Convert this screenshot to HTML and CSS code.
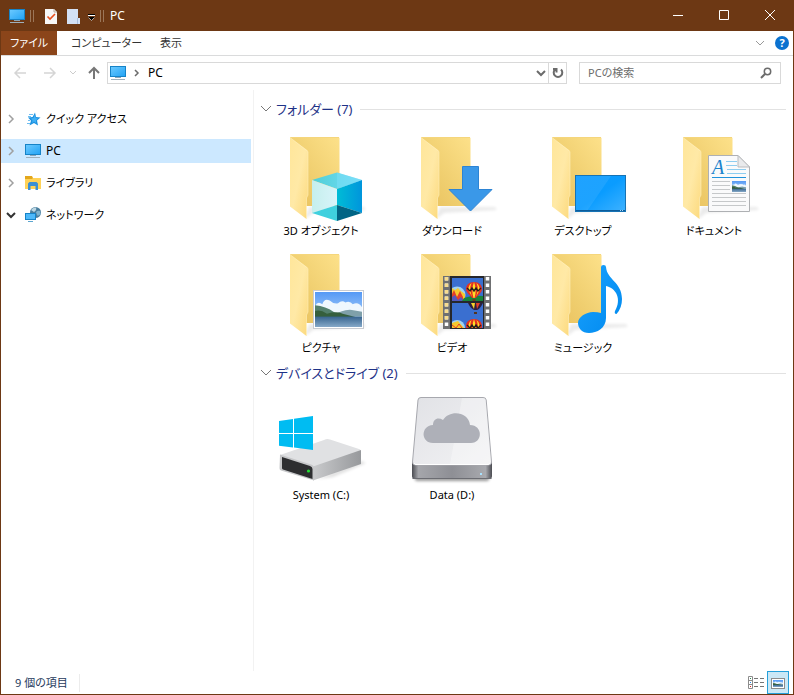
FILE: index.html
```html
<!DOCTYPE html>
<html lang="ja">

<head>
    <meta charset="UTF-8">
    <meta name="viewport" content="width=device-width, initial-scale=1.0">
    <title>PC</title>
    <link rel="stylesheet" href="styles.css">
</head>

<body>
    <!-- 共通アイコン -->
    <svg class="defs" width="0" height="0" aria-hidden="true">
        <defs>
            <linearGradient id="gBack" x1="0" y1="1" x2="1" y2="0">
                <stop offset="0" stop-color="#e8c05c" />
                <stop offset=".45" stop-color="#f0cf70" />
                <stop offset="1" stop-color="#fde18a" />
            </linearGradient>
            <linearGradient id="gFlap" x1="0" y1="0" x2="1" y2="1">
                <stop offset="0" stop-color="#ffe69a" />
                <stop offset=".5" stop-color="#ffe9a6" />
                <stop offset="1" stop-color="#fcd97c" />
            </linearGradient>
            <linearGradient id="gScreen" x1="0" y1="0" x2="1" y2="1">
                <stop offset="0" stop-color="#6ac9ff" />
                <stop offset="1" stop-color="#24a4f5" />
            </linearGradient>
            <linearGradient id="gCubeTop" x1="0" y1="0" x2="1" y2="0">
                <stop offset="0" stop-color="#4fcfd6" />
                <stop offset="1" stop-color="#76dcf8" />
            </linearGradient>
            <linearGradient id="gCubeLeft" x1="0" y1="0" x2="1" y2="0">
                <stop offset="0" stop-color="#c5efed" />
                <stop offset="1" stop-color="#d9f4fa" />
            </linearGradient>
            <linearGradient id="gCubeRight" x1="0" y1="0" x2="1" y2="0">
                <stop offset="0" stop-color="#00bcd6" />
                <stop offset="1" stop-color="#0095dc" />
            </linearGradient>
            <linearGradient id="gDesk" x1="0" y1="0" x2="1" y2="1">
                <stop offset="0" stop-color="#0c9bff" />
                <stop offset=".5" stop-color="#0a9cff" />
                <stop offset="1" stop-color="#3fb2ff" />
            </linearGradient>
            <linearGradient id="gSky" x1="0" y1="0" x2="0" y2="1">
                <stop offset="0" stop-color="#5599f5" />
                <stop offset="1" stop-color="#c8e2fb" />
            </linearGradient>
            <linearGradient id="gSea" x1="0" y1="0" x2="0" y2="1">
                <stop offset="0" stop-color="#37648f" />
                <stop offset="1" stop-color="#86a9c8" />
            </linearGradient>
            <linearGradient id="gNote" x1="0" y1="0" x2="1" y2="1">
                <stop offset="0" stop-color="#1ba3ff" />
                <stop offset="1" stop-color="#0089ee" />
            </linearGradient>
            <linearGradient id="gSide" x1="0" y1="0" x2="1" y2="0">
                <stop offset="0" stop-color="#c9cacc" />
                <stop offset="1" stop-color="#97999c" />
            </linearGradient>
            <linearGradient id="gDiskTop" x1="0" y1="0" x2="1" y2="1">
                <stop offset="0" stop-color="#e1e2e6" />
                <stop offset="1" stop-color="#f2f2f4" />
            </linearGradient>
            <linearGradient id="gDiskFront" x1="0" y1="0" x2="1" y2="0">
                <stop offset="0" stop-color="#4b4c52" />
                <stop offset=".08" stop-color="#a5a6ab" />
                <stop offset=".5" stop-color="#8e8f95" />
                <stop offset=".92" stop-color="#a8a9ae" />
                <stop offset="1" stop-color="#4b4c52" />
            </linearGradient>
            <filter id="soft" x="-30%" y="-100%" width="160%" height="300%">
                <feGaussianBlur stdDeviation="1.5" />
            </filter>
        </defs>
        <symbol id="folder" viewBox="0 0 96 94">
            <path d="M34 89 L32 88 L36 78 L91 78 L93 81 L40 84 Z" fill="#000" opacity=".08" filter="url(#soft)" />
            <path d="M17 8 H65 Q66.500 8 66.500 9.500 V77 H17 Z" fill="url(#gBack)" />
            <path d="M17 8.500 H66" stroke="#f5d67c" />
            <path d="M17 8.500 L34 21 Q35 22 35 23.500 V66 L33.500 69 V90 L17 77.500 Z" fill="url(#gFlap)" />
            <path d="M17 8.500 L35 22.500 V66 L33.500 69 V90" fill="none" stroke="#fff0be" stroke-width=".6" />
        </symbol>
        <symbol id="pc" viewBox="0 0 18 16">
            <rect x="1" y="1" width="16" height="11" fill="#1683c7" />
            <rect x="2" y="2" width="14" height="9" fill="url(#gScreen)" />
            <rect x="6" y="12" width="6" height="1" fill="#8aa5b8" />
            <rect x="2" y="14" width="14" height="1" fill="#9fb0bc" />
        </symbol>
        <symbol id="view" viewBox="0 0 51 37">
            <rect width="51" height="37" fill="url(#gSky)" />
            <path d="M0 19 V15 Q3 9 8 13 Q10 6 16 9 Q20 13 25 12 Q29 8 33 11 Q38 9 41 13 Q47 10 51 16 V26 H0 Z" fill="#eff7fe" />
            <path d="M18 26 Q30 18 40 19 L51 21 V26 Z" fill="#7fa0aa" />
            <path d="M0 14 Q12 15 20 21 L32 27 H0 Z" fill="#53806d" />
            <path d="M0 20 Q6 18 13 23 Q24 20 30 23 L46 27 H0 Z" fill="#355f3d" />
            <rect y="26" width="51" height="11" fill="url(#gSea)" />
        </symbol>
        <symbol id="balloon" viewBox="0 0 16 19">
            <path d="M8 0 C3 0 0 3 0 7 C0 11 5 14 6 16 H10 C11 14 16 11 16 7 C16 3 13 0 8 0 Z" fill="#e33122" />
            <path d="M5.500 1 Q2.500 8 6.500 15 L4.500 12 Q0 5 5.500 1 M8 0 Q5 8 7.500 16 H8.500 Q11 8 8 0 M10.500 1 Q13.500 8 9.500 15 L11.500 12 Q16 5 10.500 1" fill="#ffdf27" />
            <path d="M1 6 L4 9 L6 6 L8 9 L10 6 L12 9 L15 6" fill="none" stroke="#26201c" stroke-width="1.400" />
            <rect x="6.500" y="17" width="3" height="2" fill="#6d3d18" />
        </symbol>
    </svg>

    <div class="window">
        <header class="titlebar">
            <svg class="pc-icon" width="18" height="16"><use href="#pc" /></svg>
            <svg class="quick" width="78" height="18" viewBox="0 0 78 18">
                <path d="M4.500 3 V15 M7.500 3 V15 M74.500 3 V15 M77.500 3 V15" stroke="#9b7659" />
                <path d="M19 2 H28 L31 5 V17 H19 Z" fill="#f7f7f7" />
                <path d="M28 2 V5 H31" fill="none" stroke="#b9a99e" />
                <path d="M21.500 9.500 L24 12 L29 7" fill="none" stroke="#e8501e" stroke-width="1.600" />
                <path d="M41 2 H52 V11 H54 V17 H41 Z" fill="#d3e0f4" />
                <path d="M51.500 11 V17" stroke="#a8bddb" />
                <path d="M62 7.500 H69" stroke="#000" />
                <path d="M62 8.500 H69" stroke="#fff" />
                <path d="M62 10 H69 L65.500 13.500 Z" fill="#000" />
                <path d="M62.500 10.500 L65.500 13.500 L68.500 10.500" fill="none" stroke="#fff" stroke-width=".6" />
            </svg>
            <h1 class="title">PC</h1>
            <div class="controls">
                <button type="button" aria-label="最小化"><svg width="12" height="12"><path d="M1 5.500 H11" /></svg></button>
                <button type="button" aria-label="最大化"><svg width="12" height="12"><path d="M1.500 .5 H10.500 V9.500 H1.500 Z" /></svg></button>
                <button type="button" aria-label="閉じる"><svg width="12" height="12"><path d="M1 0 L11 10 M11 0 L1 10" /></svg></button>
            </div>
        </header>

        <div class="ribbon">
            <button type="button" class="tab active">ファイル</button>
            <button type="button" class="tab">コンピューター</button>
            <button type="button" class="tab">表示</button>
            <button type="button" class="expand" aria-label="リボンの展開"><svg width="10" height="6"><path d="M1 1 L5 5 L9 1" /></svg></button>
            <button type="button" class="help" aria-label="ヘルプ">?</button>
        </div>

        <div class="navbar">
            <button type="button" class="arrow off" aria-label="戻る"><svg width="14" height="12"><path d="M7 1 L2 6 L7 11 M2 6 H13" /></svg></button>
            <button type="button" class="arrow off" aria-label="進む"><svg width="14" height="12"><path d="M7 1 L12 6 L7 11 M12 6 H1" /></svg></button>
            <button type="button" class="recent" aria-label="最近表示した場所"><svg width="8" height="6"><path d="M1 1 L4 4 L7 1" /></svg></button>
            <button type="button" class="arrow up" aria-label="上へ"><svg width="14" height="14"><path d="M2 7 L7 2 L12 7 M7 2 V13" /></svg></button>
            <div class="address">
                <svg class="pc-icon" width="18" height="16"><use href="#pc" /></svg>
                <svg class="crumb" width="6" height="8"><path d="M1 1 L4 4 L1 7" /></svg>
                <a href="#">PC</a>
                <button type="button" class="drop" aria-label="以前の場所"><svg width="10" height="7"><path d="M1 1 L5 5 L9 1" /></svg></button>
                <button type="button" class="refresh" aria-label="更新"><svg width="12" height="12"><path d="M9 2.500 A4.300 4.300 0 1 1 3 2.500 M1 2 H4.500 V5.500" /></svg></button>
            </div>
            <div class="search">
                <input type="text" placeholder="PCの検索" aria-label="PCの検索">
                <svg width="12" height="12"><circle cx="7.500" cy="4.500" r="3.200" /><path d="M5 7 L1 11" /></svg>
            </div>
        </div>

        <div class="body">
            <nav class="tree">
                <a href="#">
                    <svg class="tri" width="10" height="10"><path d="M3 1 L7 5 L3 9" /></svg>
                    <svg width="18" height="16" viewBox="0 0 18 16">
                        <path d="M11 1.500 L12 6 L16.500 6.500 L13 9.500 L14 14.500 L10 12 L5.500 14.500 L7 9.800 L4 6.500 L8.600 6 Z" fill="#1d92e0" />
                        <path d="M11 3.500 L11.600 7 L14 7.500 L12 9.500 L12 12 L10 10.500 L8 12 L8.500 9.500 L7 7.500 L9.500 7 Z" fill="#3fb0f5" />
                        <path d="M5 3.500 H9 M4 5.500 H7 M4 9.500 H6 M3 12.500 H6" stroke="#6ebef2" />
                    </svg>
                    <span>クイック アクセス</span>
                </a>
                <a href="#" class="selected">
                    <svg class="tri" width="10" height="10"><path d="M3 1 L7 5 L3 9" /></svg>
                    <svg width="18" height="16"><use href="#pc" /></svg>
                    <span>PC</span>
                </a>
                <a href="#">
                    <svg class="tri" width="10" height="10"><path d="M3 1 L7 5 L3 9" /></svg>
                    <svg width="18" height="16" viewBox="0 0 18 16">
                        <path d="M1 1 H8 L9 3 H17 V14 H1 Z" fill="#e3a71c" />
                        <path d="M1 4 H8 L9 3 H17 V14 H1 Z" fill="#ffd257" />
                        <path d="M4 15 V8.500 L5.500 7 H12.500 L14 8.500 V15 H11.500 V11 H6.500 V15 Z" fill="#3a8fd4" />
                    </svg>
                    <span>ライブラリ</span>
                </a>
                <a href="#" class="open">
                    <svg class="tri" width="10" height="10"><path d="M1 3 L5 7 L9 3" /></svg>
                    <svg width="18" height="16" viewBox="0 0 18 16">
                        <circle cx="11.500" cy="5.500" r="5.500" fill="#4a7f9f" />
                        <path d="M7 3 Q9 0 12 .5 Q13 3 10 5 Z" fill="#bcd6e2" />
                        <path d="M12 5 Q14 3 16 4 L16.500 7 Q14 10 13 8 Z" fill="#7fb4cf" />
                        <rect x="1" y="6" width="11" height="7" fill="#1683c7" />
                        <rect x="2" y="7" width="9" height="5" fill="#4db9fa" />
                        <path d="M4 14.500 H9" stroke="#5ba5cf" />
                    </svg>
                    <span>ネットワーク</span>
                </a>
            </nav>

            <main class="content">
                <section>
                    <h2><svg width="12" height="8"><path d="M1 1 L6 6 L11 1" /></svg>フォルダー (7)</h2>
                    <div class="grid">
                        <a href="#" class="item">
                            <svg width="96" height="94" viewBox="0 0 96 94">
                                <use href="#folder" />
                                <path d="M39 51 L64 43.500 L89 51 L64 60 Z" fill="url(#gCubeTop)" />
                                <path d="M64 43.500 L89 51 L64 60 Z" fill="#7ce0fa" opacity=".5" />
                                <path d="M39 51 L64 60 V76 L39 84 Z" fill="url(#gCubeLeft)" />
                                <path d="M64 60 L89 51 V84 L64 76 Z" fill="url(#gCubeRight)" />
                                <path d="M39 84 L64 76 V92 Z" fill="#3fd0de" />
                                <path d="M64 76 L89 84 L64 92 Z" fill="#016484" />
                            </svg>
                            <span>3D オブジェクト</span>
                        </a>
                        <a href="#" class="item">
                            <svg width="96" height="94" viewBox="0 0 96 94">
                                <use href="#folder" />
                                <path d="M58.500 37.500 H74.500 V60.500 H88 L66.500 82 L45 60.500 H58.500 Z" fill="#3a98e8" stroke="#2d84d4" />
                            </svg>
                            <span>ダウンロード</span>
                        </a>
                        <a href="#" class="item">
                            <svg width="96" height="94" viewBox="0 0 96 94">
                                <use href="#folder" />
                                <rect x="40.500" y="46.500" width="50" height="36" fill="url(#gDesk)" stroke="#1673b5" />
                                <path d="M41 82 V47 H76 L52 82 Z" fill="#fff" opacity=".08" />
                                <path d="M41 81.500 H90" stroke="#0d5c9a" />
                                <path d="M85 81.500 H89" stroke="#a8d8f8" stroke-dasharray="1 1" />
                            </svg>
                            <span>デスクトップ</span>
                        </a>
                        <a href="#" class="item">
                            <svg width="96" height="94" viewBox="0 0 96 94">
                                <use href="#folder" />
                                <path d="M42.500 26.500 H72 L83.500 38 V82.500 H42.500 Z" fill="#fafafb" stroke="#aeb0b3" />
                                <path d="M72 26.500 V38 H83.500 Z" fill="#e9eaec" stroke="#b9bbbe" />
                                <text x="46" y="45" class="glyph">A</text>
                                <path d="M60 32.500 H71 M60 36.500 H71 M61 40.500 H80 M61 44.500 H80" stroke="#8ecdf0" />
                                <path d="M46 48.500 H80" stroke="#2193dc" />
                                <path d="M46 52.500 H64 M46 56.500 H64 M46 60.500 H64 M46 64.500 H80 M46 68.500 H80 M46 72.500 H80 M46 76.500 H80" stroke="#c6c8ca" />
                                <svg x="66" y="52" width="14" height="11" viewBox="0 0 51 37" preserveAspectRatio="none"><use href="#view" width="51" height="37" /></svg>
                            </svg>
                            <span>ドキュメント</span>
                        </a>
                        <a href="#" class="item">
                            <svg width="96" height="94" viewBox="0 0 96 94">
                                <use href="#folder" />
                                <rect x="40.500" y="44.500" width="50" height="38" fill="#fff" stroke="#c9ccd2" />
                                <svg x="42" y="46" width="47" height="35" viewBox="0 0 51 37" preserveAspectRatio="none"><use href="#view" width="51" height="37" /></svg>
                            </svg>
                            <span>ピクチャ</span>
                        </a>
                        <a href="#" class="item">
                            <svg width="96" height="94" viewBox="0 0 96 94">
                                <use href="#folder" />
                                <rect x="39" y="30" width="48" height="53" fill="#6f7072" />
                                <rect x="46" y="30" width="34" height="53" fill="#26272b" />
                                <path d="M42.500 31 V83 M83.500 31 V83" stroke="#fff" stroke-width="3.500" stroke-dasharray="3.500 3" />
                                <path d="M42.500 31 V76" stroke="#f7dc90" stroke-width="3.500" stroke-dasharray="3.500 3" />
                                <svg x="48" y="32" width="31" height="23">
                                    <rect width="31" height="23" fill="#3a6fd0" />
                                    <circle cx="5" cy="17" r="8.500" fill="#9fd2f2" />
                                    <path d="M0 10 L3 12 L6 10 L9 13 L13 16 V24 H0 Z" fill="#f6c92d" />
                                    <path d="M0 16 L2 12 L5 19 L8 13 L11 19 V24 H0 Z" fill="#e3402a" />
                                    <path d="M0 19 L3 17 L6 22 L9 19 L12 23 H0 Z" fill="#5558bd" />
                                    <path d="M12 20 Q20 17 31 18 V23 H10 Z" fill="#18843b" />
                                    <use href="#balloon" x="14" y="4" width="16" height="19" />
                                </svg>
                                <svg x="48" y="57" width="31" height="25">
                                    <rect width="31" height="25" fill="#3a6fd0" />
                                    <path d="M16 0 H31 Q28 6 25 7 H22 Q18 5 16 0 Z" fill="#2c1e3f" />
                                    <path d="M19 0 L22 6 L23 0 Z" fill="#f6d42b" />
                                    <path d="M24 0 L25 6 L28 0 Z" fill="#e3402a" />
                                    <rect x="22" y="9" width="3" height="2" fill="#543520" />
                                    <circle cx="5" cy="25" r="8" fill="#9fd2f2" />
                                    <path d="M0 20 L6 18 L12 25 H0 Z" fill="#f6c92d" />
                                    <path d="M0 22 L4 25 L7 21 L10 25" fill="none" stroke="#e3402a" />
                                    <use href="#balloon" x="14" y="16" width="16" height="19" />
                                </svg>
                            </svg>
                            <span>ビデオ</span>
                        </a>
                        <a href="#" class="item">
                            <svg width="96" height="94" viewBox="0 0 96 94">
                                <use href="#folder" />
                                <path d="M66 21 Q66 19 68.500 19 Q71 19 71 21 C72 34 87 36 87 53 Q87 62 81.500 68 Q79 68 80 65 C87 53 81 42 71 40 V72 C71 82 62 87 54 87 C47 87 43 82 43 77 C43 71 51 66 58 66 Q63 66 66 67 Z" fill="url(#gNote)" />
                            </svg>
                            <span>ミュージック</span>
                        </a>
                    </div>
                </section>

                <section>
                    <h2><svg width="12" height="8"><path d="M1 1 L6 6 L11 1" /></svg>デバイスとドライブ (2)</h2>
                    <div class="grid">
                        <a href="#" class="item">
                            <svg width="96" height="94" viewBox="0 0 96 94">
                                <path d="M44 86 L88 68 L93 70 L60 84 Z" fill="#000" opacity=".12" filter="url(#soft)" />
                                <path d="M7 62 L51 47 Q54 45.500 57 46.500 L86 56 Q89 57 86 58.500 L41 74 Z" fill="#e0e1e3" />
                                <path d="M40 73.500 L88 57 V71 L40 87.500 Z" fill="url(#gSide)" />
                                <path d="M7 61.500 L38 71.500 Q41 72.500 41 75 V87.500 L8 77.500 Q6.500 77 6.500 75 Z" fill="#c6c7c9" />
                                <path d="M9 64 L37 73 Q39.500 74 39.500 76 V86 L10 76.500 Q9 76 9 75 Z" fill="#2d2e30" />
                                <circle cx="35.500" cy="78" r="1.600" fill="#25e034" />
                                <path d="M6 28 L20 26 V40 H6 Z M21 25.800 L40 23 V40 H21 Z M6 41 H20 V54.500 L6 52.700 Z M21 41 H40 V57 L21 54.600 Z" fill="#00bcf2" />
                            </svg>
                            <span>System (C:)</span>
                        </a>
                        <a href="#" class="item">
                            <svg width="96" height="94" viewBox="0 0 96 94">
                                <path d="M10 84 H86 L84 88 H12 Z" fill="#000" opacity=".4" filter="url(#soft)" />
                                <path d="M8 69 H88 V83 Q88 86 85 86 H11 Q8 86 8 83 Z" fill="url(#gDiskFront)" />
                                <path d="M17 4.500 H79 Q82 4.500 82.200 7 L87.500 69 Q87.500 72 84.500 72 H11.500 Q8.500 72 8.500 69 L14 7 Q14.200 4.500 17 4.500 Z" fill="url(#gDiskTop)" stroke="#a7a8ae" />
                                <path d="M10 70 Q10 71.500 12 71.500 H84 Q86 71.500 86 70" fill="none" stroke="#fff" />
                                <path d="M58 5 H79 Q81.500 5 81.700 7 L87 69 Q87 71 84 71 H46 Z" fill="#fff" opacity=".3" />
                                <path d="M29 50 C17 50 16 33 29 32 C29 26 34 24 39 27 C46 16 65 19 66 32 C79 32 79 50 67 50 Z" fill="#aeb0b8" />
                                <path d="M8.500 85.500 H87.500" stroke="#6b6c72" />
                                <rect x="76" y="80" width="2" height="2" fill="#a8e2ff" />
                            </svg>
                            <span>Data (D:)</span>
                        </a>
                    </div>
                </section>
            </main>
        </div>

        <footer class="status">
            <span class="count">9 個の項目</span>
            <button type="button" aria-label="詳細">
                <svg width="18" height="14" viewBox="0 0 18 14">
                    <path d="M1.500 .5 H5.500 V12.500 H1.500 Z M1.500 4.500 H5.500 M1.500 8.500 H5.500" fill="#fff" stroke="#8c8c8c" />
                    <path d="M7 2.500 H17 M7 6.500 H17 M7 10.500 H17" stroke="#757575" stroke-dasharray="4 2" />
                    <rect x="3" y="2" width="1" height="1" fill="#2f8a54" />
                    <rect x="3" y="6" width="1" height="1" fill="#2c86e0" />
                    <rect x="3" y="10" width="1" height="1" fill="#e02020" />
                </svg>
            </button>
            <button type="button" class="active" aria-label="大アイコン">
                <svg width="14" height="12" viewBox="0 0 14 12">
                    <rect x=".5" y="1.500" width="13" height="10" fill="#fff" stroke="#8c8c8c" />
                    <svg x="2" y="3" width="10" height="7" viewBox="0 0 51 37" preserveAspectRatio="none"><use href="#view" width="51" height="37" /></svg>
                </svg>
            </button>
        </footer>
    </div>
</body>

</html>
```

FILE: styles.css
```css
* {
    box-sizing: border-box;
    margin: 0;
    padding: 0;
}

body {
    font: 11px/18px "Noto Sans", "Noto Sans CJK JP", sans-serif;
    font-feature-settings: "palt";
    color: #000;
}

button,
input {
    border: 0;
    background: none;
    color: inherit;
    font: inherit;
    font-feature-settings: inherit;
}

a {
    color: inherit;
    text-decoration: none;
}

svg {
    display: block;
    flex: none;
}

.defs {
    position: absolute;
}

.window {
    display: flex;
    flex-direction: column;
    min-height: 100vh;
    border: 1px solid #6d3814;
    border-top: 0;
    background: #fff;
}

/* タイトルバー */
.titlebar {
    display: flex;
    align-items: center;
    height: 31px;
    padding-left: 7px;
    background: #6d3814;
    color: #fff;
}

.title {
    flex: 1;
    padding-left: 6px;
    font-size: 12px;
    font-weight: normal;
}

.controls {
    display: flex;
}

.controls button {
    display: flex;
    align-items: center;
    justify-content: center;
    width: 46px;
    height: 31px;
}

.controls path {
    fill: none;
    stroke: #fff;
}

/* リボン */
.ribbon {
    display: flex;
    align-items: center;
    height: 25px;
    padding-right: 4px;
    border-bottom: 1px solid #dadbdc;
    color: #333;
}

.tab {
    height: 24px;
    padding: 0 9px;
}

.tab.active {
    width: 56px;
    margin-right: 5px;
    padding: 0;
    background: #8b451a;
    color: #fff;
}

.expand {
    margin-left: auto;
    margin-right: 10px;
}

.expand path,
.recent path {
    fill: none;
    stroke: #999;
}

.help {
    width: 14px;
    height: 14px;
    border-radius: 50%;
    background: #0b72d0;
    color: #fff;
    font-weight: bold;
    line-height: 14px;
}

/* アドレスバー */
.navbar {
    display: flex;
    align-items: center;
    height: 34px;
    padding: 0 12px;
}

.arrow path {
    fill: none;
    stroke: #777;
    stroke-width: 2;
}

.arrow.off {
    margin-right: 16px;
}

.arrow.off path {
    stroke: #d5d5d5;
    stroke-width: 1.5;
}

.recent {
    margin-left: -4px;
    margin-right: 10px;
}

.recent path {
    stroke: #ccc;
}

.address,
.search {
    display: flex;
    align-items: center;
    height: 22px;
    border: 1px solid #d9d9d9;
}

.address {
    flex: 1;
    margin: 0 12px 0 6px;
    padding-left: 1px;
}

.address a {
    flex: 1;
    font-size: 12px;
}

.crumb {
    margin: 0 8px 0 7px;
}

.crumb path,
.drop path,
.refresh path,
.search path,
.search circle {
    fill: none;
    stroke: #6b6b6b;
    stroke-width: 2;
}

.crumb path,
.search circle {
    stroke-width: 1.5;
}

.drop {
    padding: 0 2px;
}

.refresh {
    display: flex;
    align-items: center;
    height: 20px;
    padding: 0 2px 0 3px;
    border-left: 1px solid #d9d9d9;
}

.search {
    width: 202px;
    padding: 0 8px;
}

.search input {
    flex: 1;
    min-width: 0;
    outline: 0;
}

.search input::placeholder {
    color: #6d6d6d;
}

/* ナビゲーション */
.body {
    display: flex;
    flex: 1;
}

.tree {
    display: flex;
    flex-direction: column;
    gap: 8px;
    width: 253px;
    padding: 17px 2px 0 0;
    border-right: 1px solid #f2f2f2;
}

.tree a {
    display: flex;
    align-items: center;
    height: 24px;
    padding-left: 5px;
}

.tree span {
    padding-left: 4px;
}

.tree .selected {
    background: #cce8ff;
}

.tree .selected span {
    font-size: 12px;
}

.tri {
    margin-right: 8px;
}

.tri path {
    fill: none;
    stroke: #a0a0a0;
    stroke-width: 1.5;
}

.open .tri path {
    stroke: #333;
    stroke-width: 2;
}

/* 一覧 */
.content {
    flex: 1;
    min-width: 0;
    padding: 7px 7px 0 2px;
}

h2 {
    display: flex;
    align-items: center;
    height: 24px;
    padding-left: 4px;
    color: #1e3287;
    font-size: 13px;
    font-weight: normal;
}

h2 svg {
    margin-right: 4px;
}

h2 path {
    fill: none;
    stroke: #777;
}

h2::after {
    content: "";
    flex: 1;
    height: 1px;
    margin-left: 8px;
    background: #e2e2e2;
}

.grid {
    display: grid;
    grid-template-columns: repeat(auto-fill, 130px);
    column-gap: 1px;
    padding: 4px 0 2px;
}

.item {
    display: flex;
    flex-direction: column;
    align-items: center;
    height: 117px;
    padding-top: 4px;
    text-align: center;
}

.item span {
    margin-top: -1px;
}

.glyph {
    fill: #1a83cc;
    font: italic 20px "Liberation Serif", serif;
}

/* ステータスバー */
.status {
    display: flex;
    align-items: center;
    height: 23px;
    padding: 0 4px 0 14px;
    color: #1e395b;
}

.count {
    padding-right: 11px;
    border-right: 1px solid #ececec;
    margin-right: auto;
}

.status button {
    display: flex;
    align-items: center;
    justify-content: center;
    width: 22px;
    height: 23px;
}

.status .active {
    border: 1px solid #26a0da;
    background: #cbe8f6;
}
```
